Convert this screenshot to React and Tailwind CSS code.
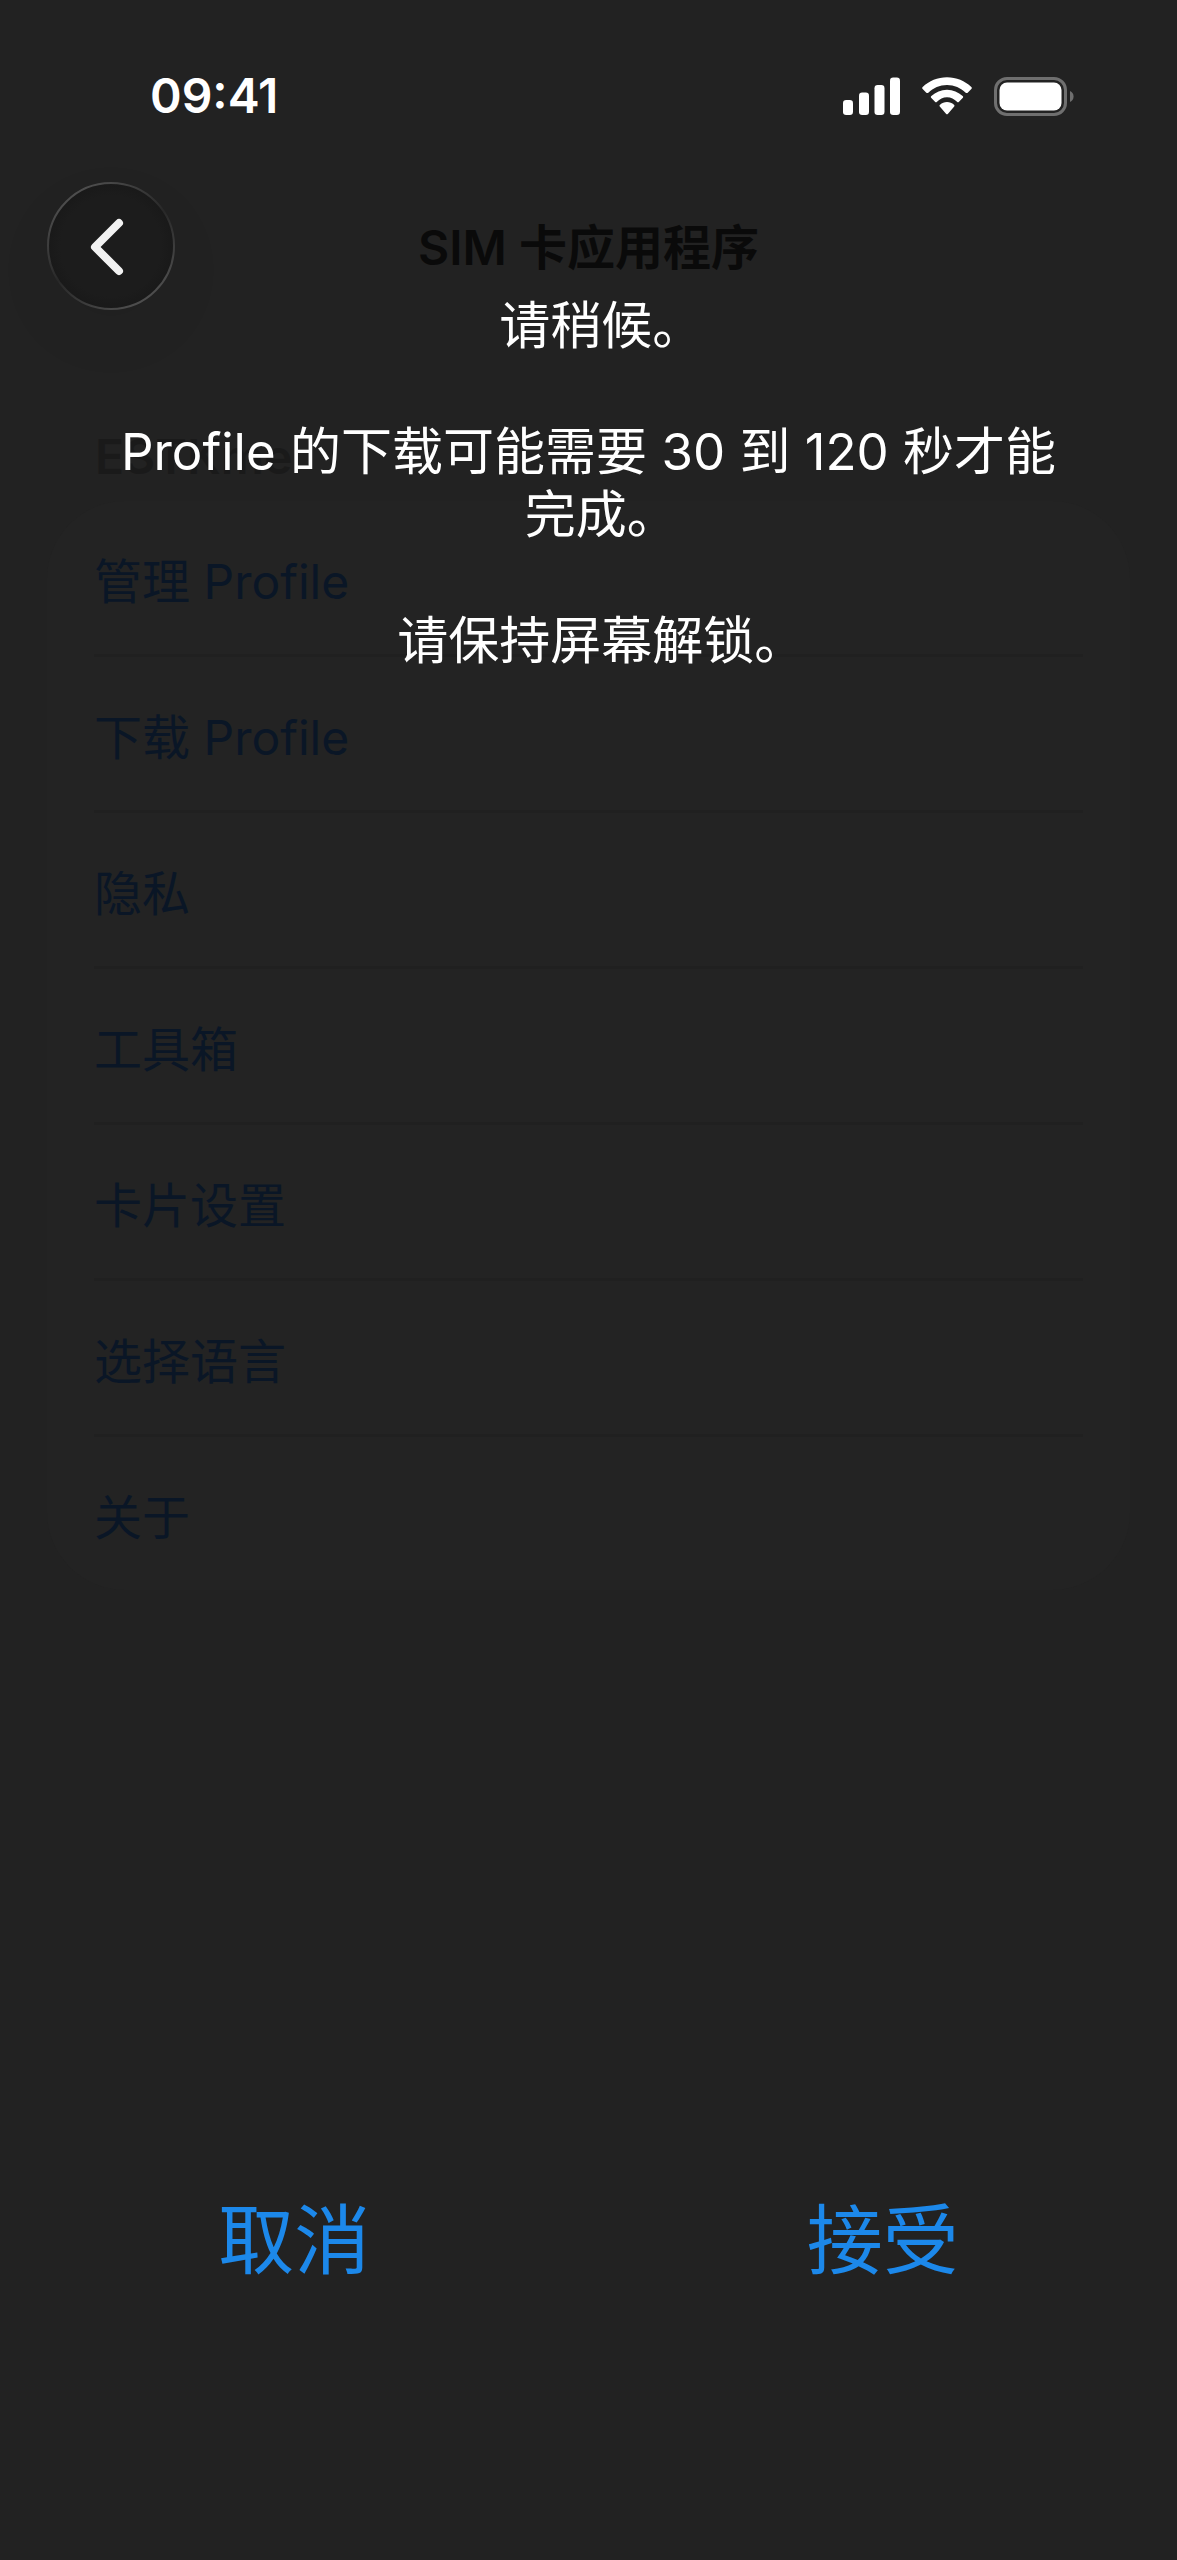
import React from 'react';

const menuItems = ['管理 Profile', '下载 Profile', '隐私', '工具箱', '卡片设置', '选择语言', '关于'];

const SignalIcon = () => (
    <svg width="57" height="38" viewBox="0 0 57 38" fill="currentColor" aria-hidden="true">
        <rect x="0" y="23" width="10" height="15" rx="3.2" />
        <rect x="16" y="15.5" width="10" height="22.5" rx="3.2" />
        <rect x="31.5" y="8" width="10" height="30" rx="3.2" />
        <rect x="47" y="0.5" width="10" height="37.5" rx="3.2" />
    </svg>
);

const WifiIcon = () => (
    <svg width="50" height="38" viewBox="0 0 150 114" fill="currentColor" aria-hidden="true">
        <path d="M75 1C47 1 21 12 2 30C0 32 0 34 2 36L13 47C15 49 17 48 19 47C34 33 53 24 75 24C97 24 116 33 131 47C133 48 135 49 137 47L148 36C150 34 150 32 148 30C129 12 103 1 75 1Z" />
        <path d="M75 38C57 38 41 45 28 57C26 59 26 61 28 63L39 74C41 76 43 76 45 74C53 67 63 61 75 61C87 61 97 67 105 74C107 76 109 76 111 74L122 63C124 61 124 59 122 57C109 45 93 38 75 38Z" />
        <path d="M75 75C67 75 60 78 54 83C52 85 52 87 54 89L72 110C74 112 76 112 78 110L96 89C98 87 98 85 96 83C90 78 83 75 75 75Z" />
    </svg>
);

const BatteryIcon = () => (
    <svg width="80" height="39" viewBox="0 0 80 39" fill="none" aria-hidden="true">
        <rect x="1.5" y="1.5" width="70" height="36" rx="11.5" stroke="#6f6f6f" strokeWidth="3" />
        <rect x="5.5" y="5.5" width="62" height="28" rx="7.5" fill="#fff" />
        <path d="M76 14C78.4 15 79.6 17 79.6 19.5C79.6 22 78.4 24 76 25Z" fill="#6f6f6f" />
    </svg>
);

const StatusBar = () => (
    <div className="flex items-center justify-between pt-16 pl-[150px] pr-[103px] text-white">
        <span className="text-5xl leading-16 font-semibold">09:41</span>
        <div className="flex items-center gap-[22px]">
            <SignalIcon />
            <WifiIcon />
            <BatteryIcon />
        </div>
    </div>
);

const BackButton = () => (
    <button type="button" aria-label="返回" className="size-32 rounded-full shadow-[0_24px_64px_rgba(0,0,0,0.05)]">
        <svg viewBox="0 0 128 128" fill="none" className="size-full" aria-hidden="true">
            <defs>
                <linearGradient id="rim" x1="0.2" y1="0.05" x2="0.8" y2="0.95">
                    <stop offset="0" stopColor="#505050" />
                    <stop offset="0.5" stopColor="#282828" />
                    <stop offset="1" stopColor="#505050" />
                </linearGradient>
                <radialGradient id="glass">
                    <stop offset="0.8" stopColor="#1c1c1c" />
                    <stop offset="1" stopColor="#191919" />
                </radialGradient>
            </defs>
            <circle cx="64" cy="64" r="63" fill="url(#glass)" stroke="url(#rim)" strokeWidth="2" />
            <path d="M72 41L48 65L72 89" stroke="#f2f2f2" strokeWidth="8" strokeLinecap="round" strokeLinejoin="round" />
        </svg>
    </button>
);

const SimMenu = () => (
    <main className="px-[47px] pt-[111px]">
        <h2 className="px-12 pt-1 text-5xl leading-16 font-semibold text-[#1a1a1a]">ESTKme</h2>
        <ul className="mt-3 rounded-[78px] bg-[#232323] px-[47px]">
            {menuItems.map((item) => (
                <li key={item} className="border-b-3 border-[#202020] last:border-b-0">
                    <button type="button" className="flex h-[153px] w-full items-center pt-2 text-left text-5xl text-[#0a1626]">
                        {item}
                    </button>
                </li>
            ))}
        </ul>
    </main>
);

const DownloadPrompt = () => (
    <div
        role="dialog"
        aria-label="下载 Profile"
        className="pointer-events-none absolute inset-0 flex flex-col justify-between pt-[294px] pb-64"
    >
        {/* halt sets the full stop at half width, so short lines stay centred */}
        <div className="flex flex-col gap-[63px] px-[100px] text-center text-[51px] leading-[63px] text-white [font-feature-settings:'halt']">
            <p>请稍候。</p>
            <p>Profile 的下载可能需要 30 到 120 秒才能完成。</p>
            <p>请保持屏幕解锁。</p>
        </div>
        <div className="pointer-events-auto grid grid-cols-2 text-[76px] leading-[128px] text-[#1c88ea]">
            <button type="button">取消</button>
            <button type="button">接受</button>
        </div>
    </div>
);

const App = () => {
    return (
        <div lang="zh-CN" className="relative min-h-screen bg-[#222222] font-['Inter','Noto_Sans_CJK_SC',sans-serif]">
            <StatusBar />
            <header className="grid grid-cols-[128px_1fr_128px] items-center px-[47px] pt-[54px]">
                <BackButton />
                <h1 className="pt-1 text-center text-5xl leading-16 font-semibold text-[#0a0a0a]">SIM 卡应用程序</h1>
            </header>
            <SimMenu />
            <DownloadPrompt />
        </div>
    );
};

export default App;
